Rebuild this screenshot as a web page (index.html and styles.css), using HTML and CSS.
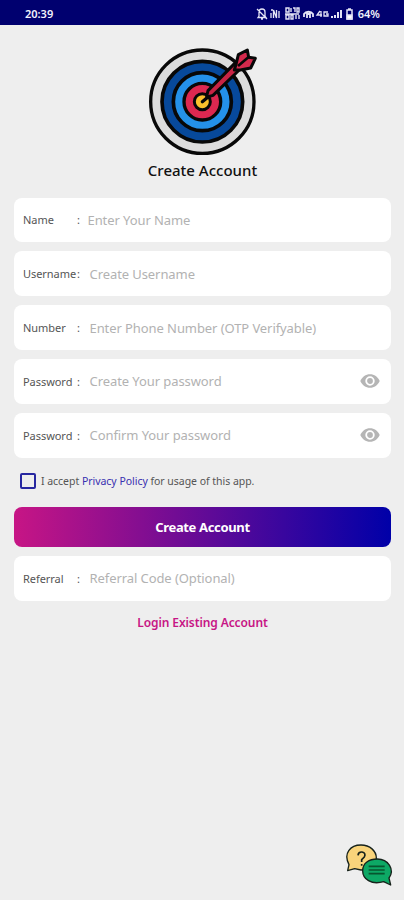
FILE: index.html
```html
<!DOCTYPE html>
<html lang="en">
<head>
<meta charset="utf-8">
<title>Create Account</title>
<link rel="stylesheet" href="styles.css">
</head>
<body>
<header class="status">
  <span class="time">20:39</span>
  <svg class="indicators" viewBox="0 0 100 16" width="100" height="16" fill="none" stroke="#e4e4f6" stroke-width="1.3">
    <path d="M3 10V6a3 3 0 0 1 6 0v4l1 1.500H2zM5 13h2M1 3l10 10"/>
    <path d="M15 12V7M17.500 12V4l3 8V4M23 12V5M15 4h2"/>
    <path d="M30 2h3v4h-3zM35 2v4M37 2h2v4M41 2v4h2V2zM30 9v4h3V9zM35 9h2v4h-2zM40 9v4M43 9v4M29 8h14" stroke-width="1.400"/>
    <path d="M48 11V8a5 4 0 0 1 9 0v3M51 12V8h3v4" stroke-width="1.800"/>
    <path d="M64 5l-3 4h5M65 5v6M72 6h-4v4h4V8h-2"/>
    <path d="M76 12v-2M79 12V9M82 12V6M85 12V4" stroke-width="2"/>
    <path d="M91 4h5v9h-5zM92 3h3" stroke-width="1.500"/><path d="M91 9h5v4h-5z" fill="#fff"/>
  </svg>
  <span class="battery">64%</span>
</header>
<main class="page">
  <svg class="target" viewBox="0 0 390 345" width="130" height="115" stroke="#080808" stroke-linejoin="round">
    <circle cx="187" cy="185" r="155" fill="#dcdcdc" stroke-width="10"/>
    <circle cx="187" cy="185" r="121" fill="#07499b" stroke-width="11"/>
    <circle cx="187" cy="185" r="87" fill="#2491e9" stroke-width="11"/>
    <circle cx="187" cy="185" r="55" fill="#dd2850" stroke-width="10"/>
    <circle cx="187" cy="185" r="24" fill="#fbc02c" stroke-width="9"/>
    <path d="M187 185l25-21" stroke-width="10" stroke-linecap="round"/>
    <path d="M200 169l4-17 83-85 17 17-85 82-17 5z" fill="#c82445" stroke-width="9"/>
    <path d="M288 73l7-29 27-14 4 22 20 3-14 29-31 6-18 0z" fill="#d52a4d" stroke-width="9"/>
    <path d="M294 78l32-27" stroke-width="8"/>
  </svg>
  <h1 class="title">Create Account</h1>
  <form class="form">
    <label class="field"><span class="name">Name</span><span class="colon">:</span><span class="hint hint-name">Enter Your Name</span></label>
    <label class="field"><span class="name">Username</span><span class="colon">:</span><span class="hint">Create Username</span></label>
    <label class="field"><span class="name">Number</span><span class="colon">:</span><span class="hint">Enter Phone Number (OTP Verifyable)</span></label>
    <label class="field"><span class="name">Password</span><span class="colon">:</span><span class="hint">Create Your password</span>
      <svg class="eye" viewBox="0 0 20 14" width="20" height="14"><path d="M.3 7C2.200 2.700 5.700.2 10 .2S17.800 2.700 19.700 7C17.800 11.300 14.300 13.800 10 13.800S2.200 11.300.3 7z" fill="#b5b5b5"/><circle cx="10" cy="7" r="3.800" fill="#b5b5b5" stroke="#fff" stroke-width="1.800"/></svg></label>
    <label class="field"><span class="name">Password</span><span class="colon">:</span><span class="hint">Confirm Your password</span>
      <svg class="eye" viewBox="0 0 20 14" width="20" height="14"><path d="M.3 7C2.200 2.700 5.700.2 10 .2S17.800 2.700 19.700 7C17.800 11.300 14.300 13.800 10 13.800S2.200 11.300.3 7z" fill="#b5b5b5"/><circle cx="10" cy="7" r="3.800" fill="#b5b5b5" stroke="#fff" stroke-width="1.800"/></svg></label>
    <div class="accept"><span class="box"></span><span class="terms">I accept <a class="policy">Privacy Policy</a> for usage of this app.</span></div>
    <button class="submit" type="button">Create Account</button>
    <label class="field"><span class="name">Referral</span><span class="colon">:</span><span class="hint">Referral Code (Optional)</span></label>
  </form>
  <a class="login">Login Existing Account</a>
</main>
<svg class="chat" viewBox="0 0 150 132" width="50" height="44" stroke="#17221b" stroke-width="4" stroke-linejoin="round">
  <path d="M8 86L12 68C-6 34 16 9 48 9C75 9 94 27 94 48C94 71 75 84 48 84L29 80Z" fill="#f9d47b"/>
  <path d="M39 40Q40 29 51 30Q64 33 58 45L50 53V60M50 66V71" fill="none" stroke-width="5"/>
  <path d="M137 129L116 119C79 130 53 111 53 86C53 63 72 51 97 51C130 51 150 83 132 108Z" fill="#0da865"/>
  <path d="M71 73H119M71 84H119M71 95H119" stroke="#07552f" stroke-width="5"/>
</svg>
</body>
</html>
```
FILE: styles.css
```css
* { box-sizing: border-box; }
body {
  margin: 0;
  height: 900px;
  overflow: hidden;
  background: #eeeeee;
  font-family: "Noto Sans", sans-serif;
  color: #555;
}
.status {
  display: flex;
  align-items: center;
  height: 25px;
  padding: 2px 24px 0 25px;
  background: #00006f;
  color: #f2f2fc;
  font-size: 11px;
  font-weight: 600;
}
.indicators { margin-left: auto; margin-right: 2px; }
.page {
  display: flex;
  flex-direction: column;
  align-items: center;
  padding: 15px 13px 0 14px;
}
.target { margin-left: 4px; }
.title {
  margin: 4px 0 0;
  height: 22px;
  line-height: 22px;
  font-size: 15px;
  font-weight: 500;
  color: #111;
}
.form {
  display: flex;
  flex-direction: column;
  gap: 9.4px;
  width: 100%;
  margin-top: 16.500px;
}
.field {
  display: flex;
  align-items: center;
  height: 44.500px;
  padding: 0 11px 0 9px;
  border-radius: 8px;
  background: #fff;
}
.name { width: 54px; font-size: 11px; white-space: nowrap; letter-spacing: -0.050px; }
.colon { width: 12.500px; font-size: 11px; }
.hint { font-size: 13px; color: #b2b2b2; white-space: nowrap; letter-spacing: -0.080px; }
.hint-name { margin-left: -2px; }
.eye { margin-left: auto; }
.accept {
  display: flex;
  align-items: center;
  gap: 5px;
  height: 28px;
  padding-left: 6px;
  font-size: 10.500px;
  letter-spacing: -0.030px;
}
.box { width: 16px; height: 16px; border: 2px solid #2727a0; border-radius: 2px; }
.policy { color: #3830b0; }
.submit {
  height: 40px;
  margin-top: 2.500px;
  padding: 0;
  border: 0;
  border-radius: 8px;
  background: linear-gradient(90deg, #c71585, #0000a8);
  color: #fff;
  font: 700 13px "Noto Sans", sans-serif;
  letter-spacing: -0.350px;
}
.login {
  margin-top: 13px;
  font-size: 12px;
  line-height: 18px;
  font-weight: 600;
  letter-spacing: -0.100px;
  color: #c71585;
}
.chat { position: fixed; left: 345px; top: 842px; }
```
